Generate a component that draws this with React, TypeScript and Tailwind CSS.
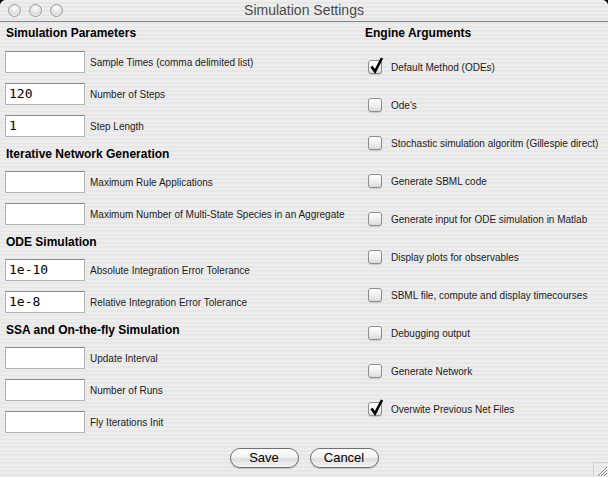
import React from 'react';

const groups = [
  {
    title: 'Simulation Parameters',
    rows: [
      ['', 'Sample Times (comma delimited list)'],
      ['120', 'Number of Steps'],
      ['1', 'Step Length'],
    ],
  },
  {
    title: 'Iterative Network Generation',
    rows: [
      ['', 'Maximum Rule Applications'],
      ['', 'Maximum Number of Multi-State Species in an Aggregate'],
    ],
  },
  {
    title: 'ODE Simulation',
    rows: [
      ['1e-10', 'Absolute Integration Error Tolerance'],
      ['1e-8', 'Relative Integration Error Tolerance'],
    ],
  },
  {
    title: 'SSA and On-the-fly Simulation',
    rows: [
      ['', 'Update Interval'],
      ['', 'Number of Runs'],
      ['', 'Fly Iterations Init'],
    ],
  },
];

const engineArgs: [string, boolean][] = [
  ['Default Method (ODEs)', true],
  ["Ode's", false],
  ['Stochastic simulation algoritm (Gillespie direct)', false],
  ['Generate SBML code', false],
  ['Generate input for ODE simulation in Matlab', false],
  ['Display plots for observables', false],
  ['SBML file, compute and display timecourses', false],
  ['Debugging output', false],
  ['Generate Network', false],
  ['Overwite Previous Net Files', true],
];

function TrafficLight() {
  return (
    <div className="w-[13px] h-[13px] rounded-full border border-[#9c9c9c] bg-[radial-gradient(circle_at_50%_30%,#ffffff_0%,#e4e4e4_45%,#c2c2c2_100%)] shadow-[inset_0_-1px_1px_rgba(255,255,255,0.8)]" />
  );
}

function TextField({ value }: { value: string }) {
  return (
    <div className="w-[80px] h-[22px] shrink-0 bg-white border border-[#b4b4b4] border-t-[#8a8a8a] flex items-center pl-[3px] font-['DejaVu_Sans_Mono',monospace] text-[13px] text-black">
      {value}
    </div>
  );
}

function Checkbox({ checked }: { checked: boolean }) {
  return (
    <div className="relative w-[14px] h-[14px] shrink-0 ml-[3px] rounded-[3px] border border-[#8c8c8c] bg-[linear-gradient(to_bottom,#ffffff,#f0f0f0_50%,#dcdcdc)] shadow-[0_1px_1px_rgba(0,0,0,0.15)]">
      {checked && (
        <svg className="absolute left-[0px] top-[-5px]" width="15" height="18" viewBox="0 0 15 18">
          <path d="M2.5 10.5 L6 15.5 L13 2" fill="none" stroke="#000" strokeWidth="2.6" strokeLinejoin="miter" />
        </svg>
      )}
    </div>
  );
}

function Button({ label }: { label: string }) {
  return (
    <div className="w-[69px] h-[20px] rounded-full border border-[#707070] bg-[linear-gradient(to_bottom,#ffffff,#f2f2f2_45%,#dedede_55%,#f4f4f4)] shadow-[0_1px_1px_rgba(0,0,0,0.2)] flex items-center justify-center text-[13px] text-black">
      {label}
    </div>
  );
}

export default function App() {
  return (
    <div className="w-[608px] h-[477px] bg-black font-['Liberation_Sans',Arial,sans-serif]">
      <div className="relative h-full flex flex-col rounded-t-[6px] overflow-hidden bg-[repeating-linear-gradient(to_bottom,#ededed_0px,#ededed_2px,#e7e7e7_2px,#e7e7e7_4px)]">
        {/* title bar */}
        <div className="relative h-[22px] shrink-0 flex items-center gap-[8px] pl-[8px] border-b border-[#858585] bg-[repeating-linear-gradient(to_bottom,#eeeeee_0px,#eeeeee_2px,#e6e6e6_2px,#e6e6e6_4px)]">
          <TrafficLight />
          <TrafficLight />
          <TrafficLight />
          <div className="absolute inset-0 flex items-center justify-center text-[14px] text-[#4a4a4a]">
            Simulation Settings
          </div>
        </div>

        <div className="flex">
          <div className="w-[365px] shrink-0 pl-[5px] pt-[3px]">
            {groups.map((g, i) => (
              <div key={g.title}>
                <div
                  className={
                    i === 0
                      ? 'h-[16px] leading-[16px] pl-[1px] mb-[10px] text-[12px] font-bold text-black'
                      : 'h-[16px] leading-[16px] pl-[1px] mt-[9px] mb-[9px] text-[12px] font-bold text-black'
                  }
                >
                  {g.title}
                </div>
                <div className="flex flex-col gap-[10px]">
                  {g.rows.map(([v, label]) => (
                    <div key={label} className="flex items-center gap-[5px] h-[22px]">
                      <TextField value={v} />
                      <span className="text-[10px] text-[#1c1c1c]">{label}</span>
                    </div>
                  ))}
                </div>
              </div>
            ))}
          </div>

          <div className="flex-1 pt-[3px]">
            <div className="h-[16px] leading-[16px] mb-[7px] text-[12px] font-bold text-black">Engine Arguments</div>
            {engineArgs.map(([label, checked]) => (
              <div key={label} className="h-[38px] flex items-center gap-[9px]">
                <Checkbox checked={checked} />
                <span className="text-[10px] text-[#1c1c1c]">{label}</span>
              </div>
            ))}
          </div>
        </div>

        <div className="mt-[15px] flex justify-center gap-[11px]">
          <Button label="Save" />
          <Button label="Cancel" />
        </div>

        {/* resize grip */}
        <svg className="absolute right-0 bottom-0" width="15" height="15" viewBox="0 0 15 15">
          <path d="M0 0.5 H15 M0.5 0 V15" stroke="#d0d0d0" strokeWidth="1" />
          <path d="M5 14 L14 5 M8 14 L14 8 M11 14 L14 11" stroke="#7a7a7a" strokeWidth="1" />
          <path d="M6 14 L14 6 M9 14 L14 9 M12 14 L14 12" stroke="#ffffff" strokeWidth="1" />
        </svg>
      </div>
    </div>
  );
}
